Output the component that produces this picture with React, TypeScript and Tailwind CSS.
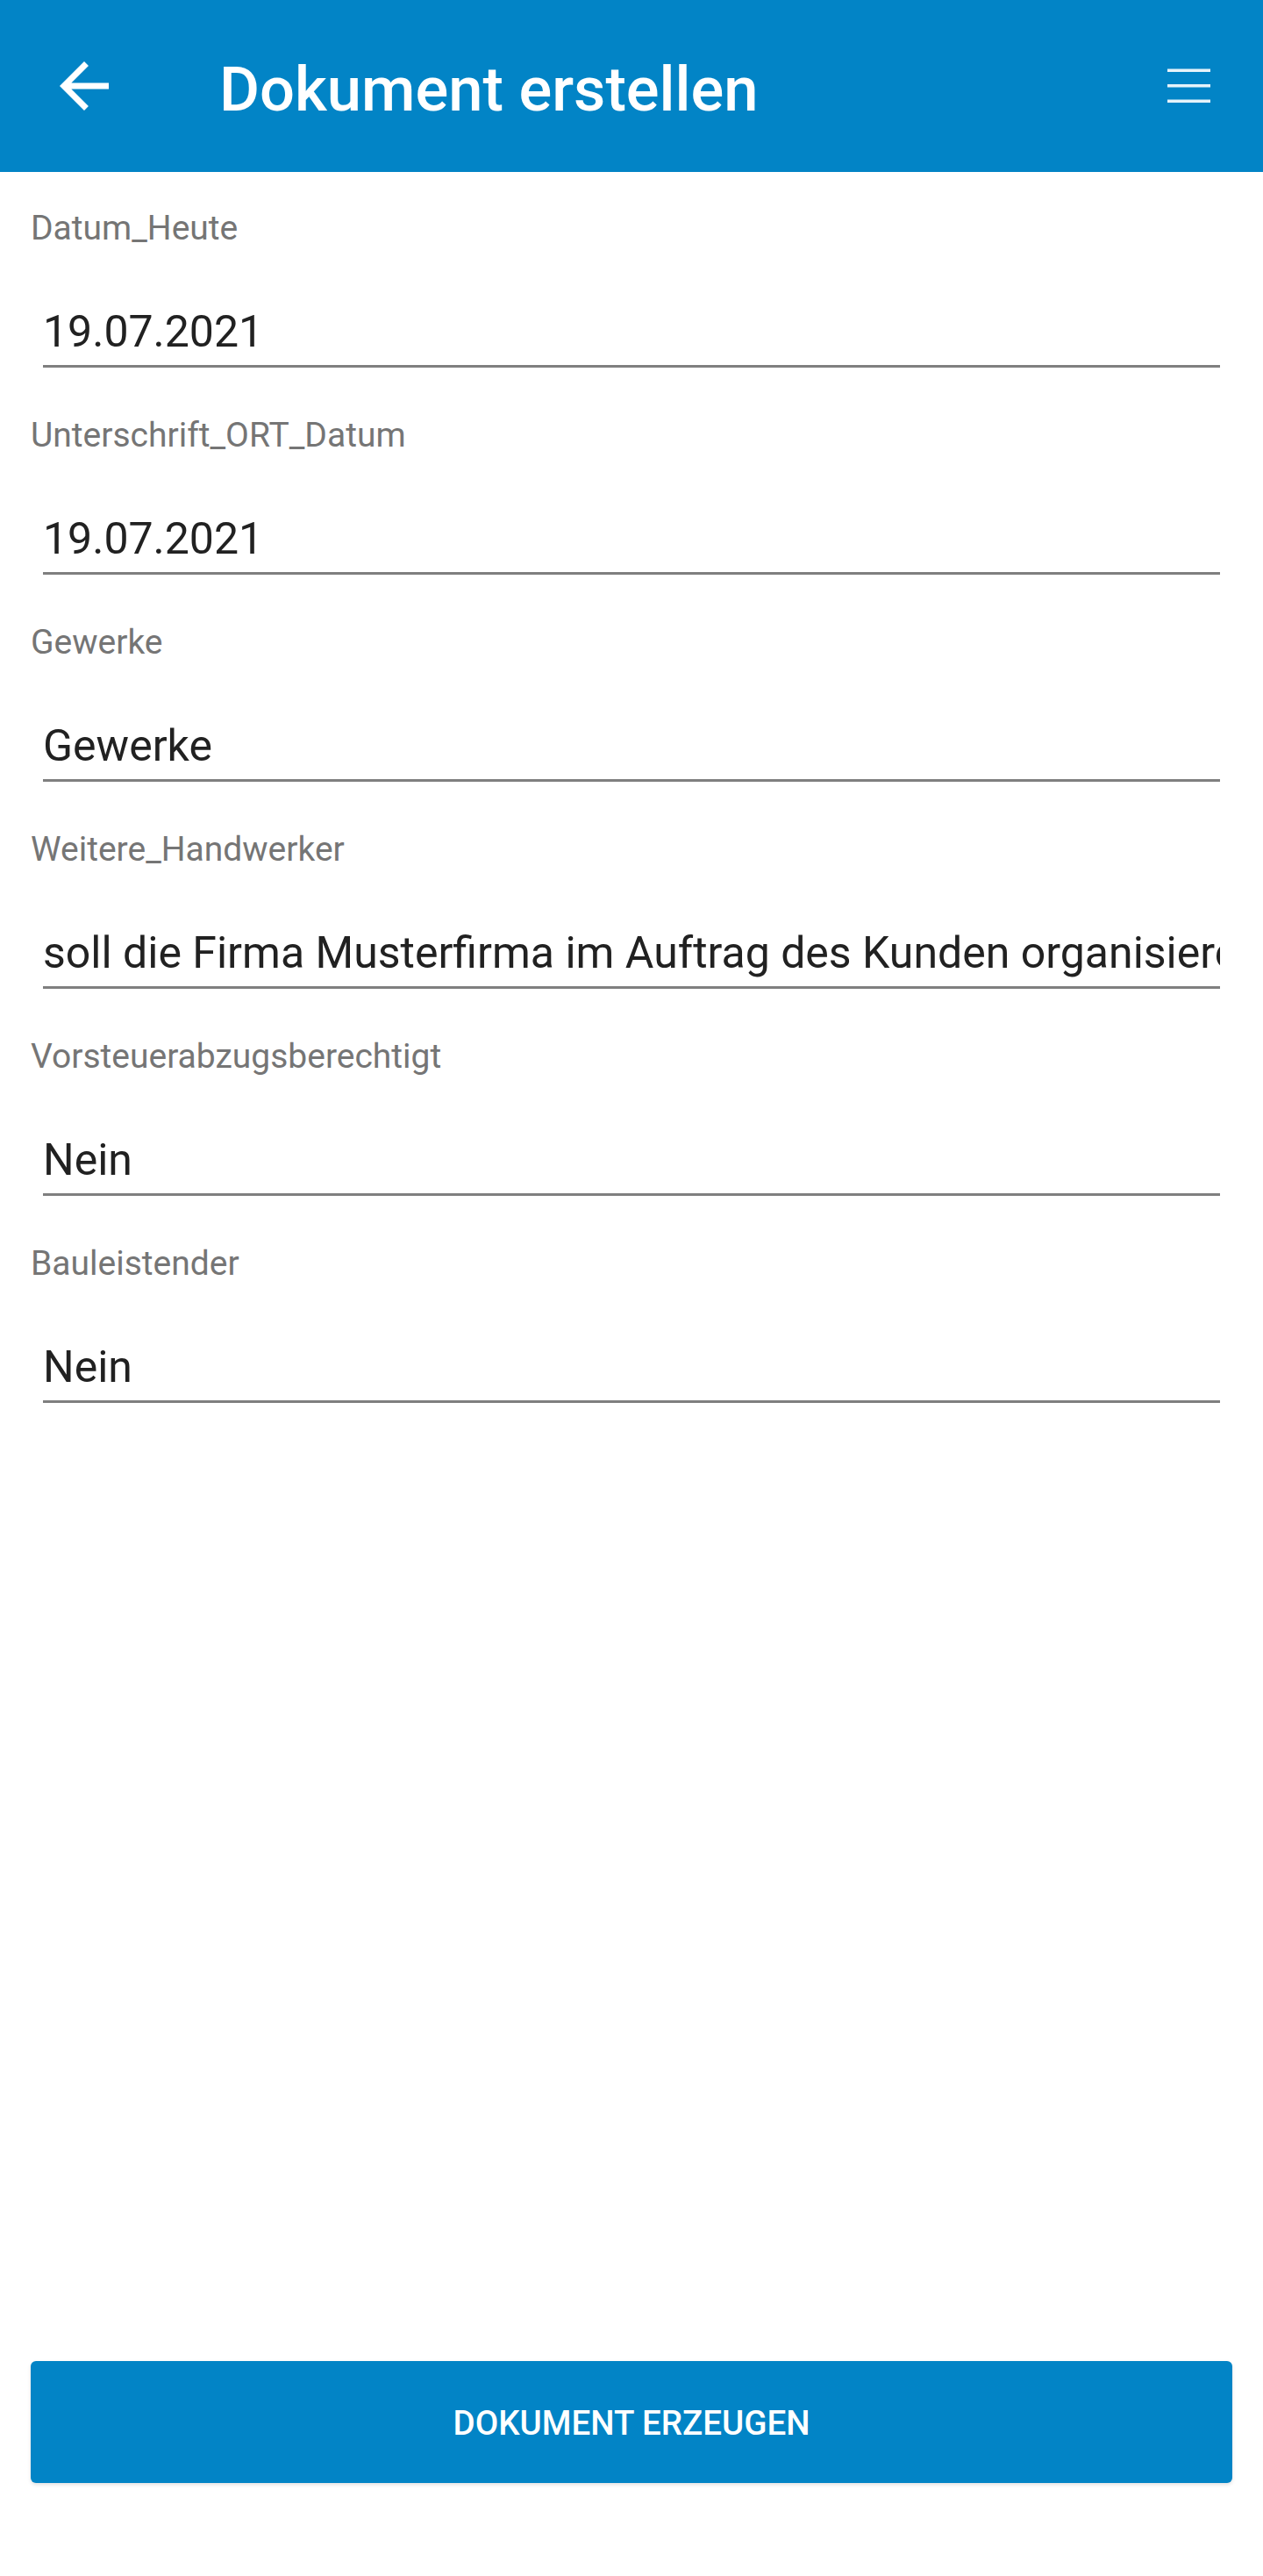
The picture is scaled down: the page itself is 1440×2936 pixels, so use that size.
import React from "react";

type Field = {
  label: string;
  value: string;
};

const fields: Field[] = [
  { label: "Datum_Heute", value: "19.07.2021" },
  { label: "Unterschrift_ORT_Datum", value: "19.07.2021" },
  { label: "Gewerke", value: "Gewerke" },
  {
    label: "Weitere_Handwerker",
    value: "soll die Firma Musterfirma im Auftrag des Kunden organisieren",
  },
  { label: "Vorsteuerabzugsberechtigt", value: "Nein" },
  { label: "Bauleistender", value: "Nein" },
];

const BackArrow = () => (
  <svg width="84" height="84" viewBox="0 0 24 24" fill="#ffffff">
    <path d="M20 11H7.83l5.59-5.59L12 4l-8 8 8 8 1.41-1.41L7.83 13H20v-2z" />
  </svg>
);

const MenuLines = () => (
  <svg width="49" height="40" viewBox="0 0 49 40" fill="#ffffff">
    <rect x="0" y="0.5" width="49" height="3.5" opacity="0.9" />
    <rect x="0" y="18" width="49" height="3.5" opacity="0.9" />
    <rect x="0" y="35.5" width="49" height="3.5" opacity="0.9" />
  </svg>
);

const FormField = ({ label, value }: Field) => {
  return (
    <div className="flex flex-col">
      <div className="h-[45px] text-[39px] leading-[45px] text-[#757575]">
        {label}
      </div>
      <div className="mx-[14px] mt-[67px] h-[69px] overflow-hidden border-b-[3px] border-[#7f7f7f]">
        <div className="whitespace-nowrap text-[50px] leading-[57px] text-[#212121]">
          {value}
        </div>
      </div>
    </div>
  );
};

export default function App() {
  return (
    <div
      className="flex min-h-[2936px] w-[1440px] flex-col bg-white"
      style={{ fontFamily: "Roboto, 'Noto Sans', sans-serif" }}
    >
      <header className="flex h-[196px] shrink-0 items-center bg-[#0284c6]">
        <button className="ml-[54px] flex h-[84px] w-[84px] items-center justify-center">
          <BackArrow />
        </button>
        <h1 className="ml-[112px] pt-[8px] text-[70.5px] font-medium leading-[82px] text-white">
          Dokument erstellen
        </h1>
        <button className="ml-auto mr-[60px] flex items-center">
          <MenuLines />
        </button>
      </header>

      <main className="flex flex-1 flex-col gap-[55px] px-[35px] pt-[42px]">
        {fields.map((f) => (
          <FormField key={f.label} label={f.label} value={f.value} />
        ))}
      </main>

      <div className="px-[35px] pb-[106px]">
        <button className="flex h-[139px] w-full items-center justify-center rounded-[6px] bg-[#0284c6] pt-[3px] text-[38.5px] font-medium text-white shadow-[0_2px_4px_rgba(0,0,0,0.12)]">
          DOKUMENT ERZEUGEN
        </button>
      </div>
    </div>
  );
}
